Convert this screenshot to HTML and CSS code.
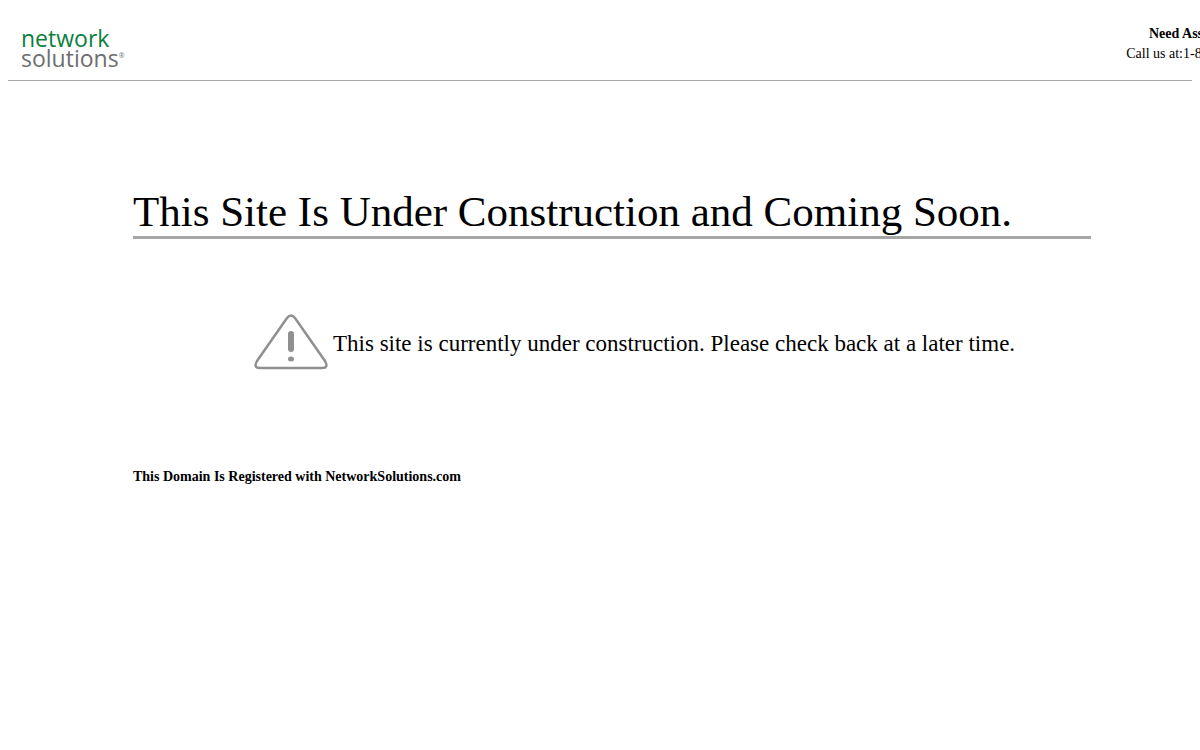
FILE: index.html
```
<!DOCTYPE html>
<html lang="en">
<head>
  <meta charset="UTF-8" />
  <title>Under Construction</title>
  <meta name="viewport" content="width=device-width, initial-scale=1" />
  <link rel="stylesheet" href="styles.css">
</head>
<body>
  <header class="header">
    <a class="logo" href="#" aria-label="Network Solutions">
      <span class="logo-top">network</span>
      <span class="logo-bottom">solutions<sup>®</sup></span>
    </a>
    <div class="assistance">
      <strong>Need Assistance?</strong>
      <span>Call us at:1-866-391-4357</span>
    </div>
  </header>

  <main class="content">
    <h1>This Site Is Under Construction and Coming Soon.</h1>

    <div class="message">
      <svg class="warning" viewBox="0 0 74 56" aria-hidden="true">
        <path d="M33 4 L3 47 Q-1 54 6 54 H68 Q75 54 71 47 L41 4 Q37 -1 33 4 Z" />
        <path class="mark" d="M37 20 V35" />
        <ellipse cx="37" cy="45" rx="3" ry="2.5" />
      </svg>
      <p>This site is currently under construction. Please check back at a later time.</p>
    </div>

    <p class="registered">This Domain Is Registered with NetworkSolutions.com</p>
  </main>
</body>
</html>
```
FILE: styles.css
```
body {
  margin: 0;
  padding: 8px;
  background: #fff;
  color: #000;
  font-family: "Liberation Serif", "Times New Roman", serif;
  overflow-x: hidden;
}

.header {
  display: flex;
  justify-content: space-between;
  align-items: flex-start;
  padding: 16px 0 12px 13px;
  border-bottom: 1px solid #aaa;
}

.logo {
  display: flex;
  flex-direction: column;
  font-family: "Open Sans", "Noto Sans", sans-serif;
  font-size: 23px;
  font-weight: 500;
  line-height: 20px;
  padding-top: 4px;
  text-decoration: none;
}

.logo-top {
  color: #0a8040;
}

.logo-bottom {
  color: #6d6e70;
}

.logo sup {
  font-size: 7px;
  line-height: 0;
}

/* the phone block hangs past the right edge */
.assistance {
  display: flex;
  flex-direction: column;
  align-items: center;
  margin-right: -82px;
  font-size: 14px;
  line-height: 20px;
  white-space: nowrap;
}

.content {
  margin: 107px 101px 0 125px;
}

h1 {
  margin: 0;
  border-bottom: 3px solid #a6a6a6;
  font-size: 43px;
  line-height: 48px;
  font-weight: normal;
}

.message {
  display: flex;
  align-items: center;
  gap: 5px;
  margin: 75px 0 97px;
  padding-left: 121px;
}

.message p {
  margin: 0;
  padding-top: 3px;
  font-size: 23px;
  line-height: 28px;
}

.warning {
  flex: none;
  width: 74px;
  height: 56px;
  fill: none;
  stroke: #909090;
  stroke-width: 2.5;
}

.warning .mark {
  stroke-width: 6;
  stroke-linecap: round;
}

.warning ellipse {
  fill: #909090;
  stroke: none;
}

.registered {
  margin: 0;
  font-size: 14px;
  line-height: 20px;
  font-weight: bold;
}
```
